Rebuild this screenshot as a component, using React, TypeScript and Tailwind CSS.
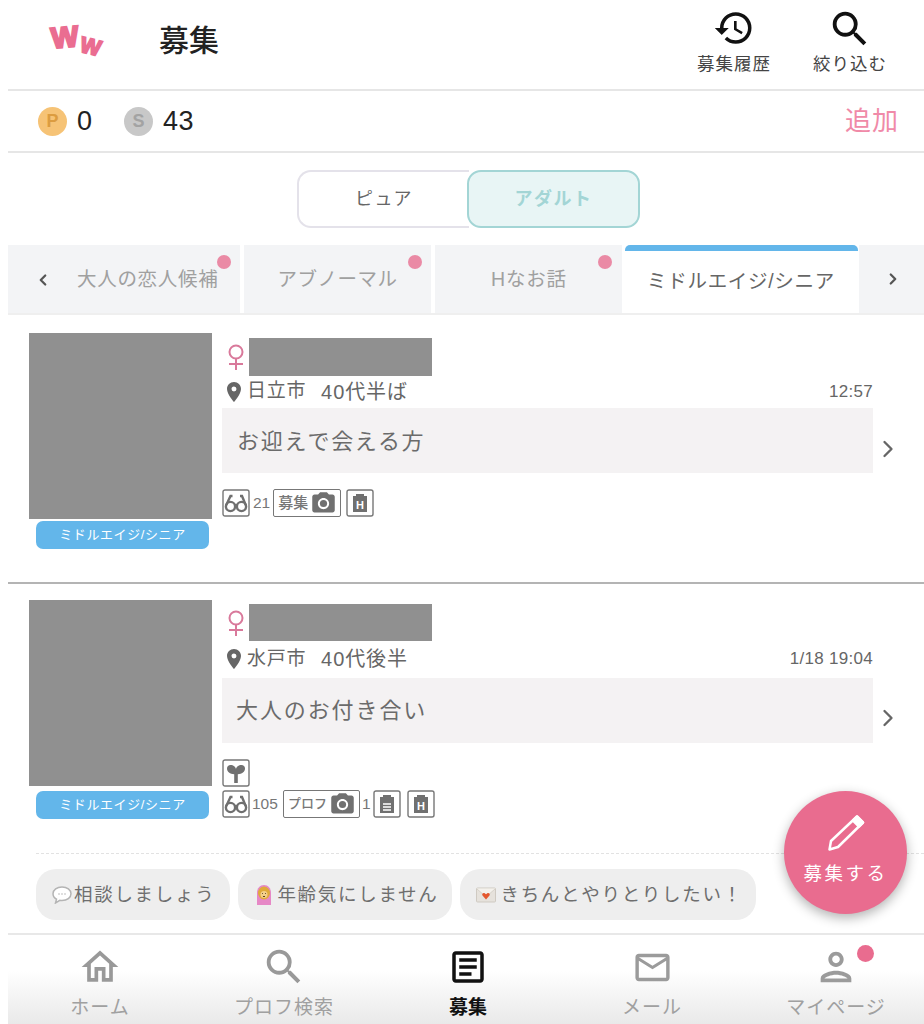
import { ChevronLeft, ChevronRight } from "lucide-react";
import { MdHistory, MdSearch, MdOutlineHome, MdOutlineArticle, MdMailOutline, MdOutlinePerson, MdPhotoCamera } from "react-icons/md";

const FONT = "[font-family:'Liberation_Sans','Noto_Sans_CJK_JP',sans-serif]";

function Glasses() {
  return (
    <svg viewBox="0 0 28 28" className="w-[28px] h-[28px]" fill="none" stroke="#6f6f6f" strokeWidth="2.4">
      <rect x="1" y="1" width="26" height="26" rx="2" strokeWidth="1.4" stroke="#777" />
      <circle cx="8.5" cy="17.5" r="4.6" />
      <circle cx="19.5" cy="17.5" r="4.6" />
      <path d="M12.8 16.5c.8-.7 1.6-.7 2.4 0M4.3 16 8.5 7h2M23.7 16 20 7h-2" />
    </svg>
  );
}

function Clip({ letter }: { letter?: string }) {
  return (
    <svg viewBox="0 0 28 28" className="w-[28px] h-[28px]">
      <rect x="1" y="1" width="26" height="26" rx="2" fill="none" stroke="#777" strokeWidth="1.4" />
      <path d="M7 7h3V5h8v2h3v16H7z" fill="#707070" />
      {letter ? (
        <text x="14" y="20" textAnchor="middle" fontSize="11" fontWeight="700" fill="#fff" fontFamily="Liberation Sans">
          {letter}
        </text>
      ) : (
        <path d="M10 14h8M10 17h8M10 20h8" stroke="#fff" strokeWidth="1.3" />
      )}
    </svg>
  );
}

function Sprout() {
  return (
    <svg viewBox="0 0 28 28" className="w-[28px] h-[28px]">
      <rect x="1" y="1" width="26" height="26" rx="2" fill="none" stroke="#777" strokeWidth="1.4" />
      <path d="M12.2 24v-8.7C8 15 5 13 5 9.500 5 7.500 6.500 6 8.500 6c2.800 0 5.500 2 5.500 4.500C14 8 16.700 6 19.500 6 21.500 6 23 7.500 23 9.500c0 3.500-3 5.500-7.200 5.800V24z" fill="#707070" />
    </svg>
  );
}

function PhotoTag({ label, size }: { label: string; size: string }) {
  return (
    <div className={`h-[28px] pl-[4px] pr-[3px] border-[1.5px] border-[#777] rounded-[2px] flex items-center gap-[2px] ${size} text-[#777] font-medium`}>
      {label}
      <MdPhotoCamera className="w-[27px] h-[27px] text-[#707070]" />
    </div>
  );
}

function Female() {
  return (
    <svg viewBox="0 0 20 26" className="w-[20px] h-[26px] shrink-0" fill="none" stroke="#d9799b" strokeWidth="2">
      <circle cx="10" cy="8" r="6.500" />
      <path d="M10 14.500V26M3 20h14" />
    </svg>
  );
}

function Pin() {
  return (
    <svg viewBox="0 0 24 24" className="w-[24px] h-[24px] shrink-0" fill="#666">
      <path d="M12 2C8.130 2 5 5.130 5 9c0 5.250 7 13 7 13s7-7.750 7-13c0-3.870-3.130-7-7-7zm0 9.500a2.500 2.500 0 0 1 0-5 2.500 2.500 0 0 1 0 5z" />
    </svg>
  );
}

function Post({
  city,
  age,
  time,
  message,
  top,
  nameTop,
  nameH,
  locH,
  badgeMt,
  chevronTop,
  msgClass,
  height,
  children,
}: {
  city: string;
  age: string;
  time: string;
  message: string;
  top: string;
  nameTop: string;
  nameH: string;
  locH: string;
  badgeMt: string;
  chevronTop: string;
  msgClass: string;
  height: string;
  children: React.ReactNode;
}) {
  return (
    <div className={`flex ${top} ${height}`}>
      <div className="w-[204px] pl-[21px] shrink-0">
        <div className="w-[183px] h-[186px] bg-[#909090]" />
        <div className={`${badgeMt} ml-[7px] w-[173px] h-[28px] rounded-[7px] bg-[#63b6ea] text-white text-[13px] tracking-[0.6px] flex items-center justify-center`}>
          ミドルエイジ/シニア
        </div>
      </div>
      <div className={`w-[651px] ml-[10px] shrink-0 ${nameTop}`}>
        <div className="flex items-center pl-[4px]">
          <Female />
          <div className={`ml-[3px] w-[183px] ${nameH} bg-[#909090]`} />
        </div>
        <div className={`flex items-center ${locH} text-[#666] pb-[1px]`}>
          <Pin />
          <span className="text-[19px] tracking-[0.7px] ml-[1px]">{city}</span>
          <span className="text-[20px] tracking-[0.9px] ml-[15px]">{age}</span>
          <span className="ml-auto text-[17px] tracking-[0.3px]">{time}</span>
        </div>
        <div className={`h-[65px] bg-[#f4f2f3] flex items-center ${msgClass} text-[22px] text-[#6b6b6b]`}>
          {message}
        </div>
        <div className="mt-[16px]">{children}</div>
      </div>
      <div className="flex-1 flex items-start">
        <ChevronRight className={`w-[28px] h-[28px] text-[#666] ml-[1px] ${chevronTop}`} strokeWidth={2} />
      </div>
    </div>
  );
}

function Chip({ icon, label, pad }: { icon: React.ReactNode; label: string; pad: string }) {
  return (
    <div className={`h-[51px] rounded-[20px] bg-[#eeeeee] flex items-center ${pad} text-[18.500px] tracking-[1.700px] text-[#6e6e6e]`}>
      {icon}
      {label}
    </div>
  );
}

function NavItem({ icon, label, active, dot }: { icon: React.ReactNode; label: string; active?: boolean; dot?: boolean }) {
  return (
    <div className="relative w-[184px] shrink-0 flex flex-col items-center pt-[9px]">
      <div className="h-[46px] flex items-center">{icon}</div>
      <span className={`text-[19px] leading-[26px] mt-[5px] ${active ? "font-bold text-[#111]" : "text-[#a0a0a0] tracking-[1px]"}`}>{label}</span>
      {dot && <span className="absolute left-[113px] top-[10px] w-[17px] h-[17px] rounded-full bg-[#e96c8f]" />}
    </div>
  );
}

export default function App() {
  return (
    <div className={`${FONT} relative w-[924px] h-[1024px] overflow-hidden bg-white pl-[8px] flex flex-col`}>
      {/* Header */}
      <div className="h-[91px] border-b-2 border-[#e6e6e6] flex shrink-0">
        <div className="w-[151px] flex items-start">
          <svg viewBox="0 0 60 40" className="w-[60px] h-[40px] ml-[40px] mt-[22px] overflow-visible">
            <text x="3" y="25" fontSize="29" fontWeight="900" fill="#ea6d91" stroke="#ea6d91" strokeWidth="2.200" fontFamily="Liberation Sans" transform="rotate(-5 18 15)">W</text>
            <text x="32" y="32" fontSize="22" fontWeight="900" fill="#ea6d91" stroke="#ea6d91" strokeWidth="1.800" fontFamily="Liberation Sans" transform="rotate(14 43 25)">W</text>
          </svg>
        </div>
        <h1 className="text-[30px] leading-[81px] text-[#222] font-medium">募集</h1>
        <div className="ml-auto flex">
          <div className="w-[116px] flex flex-col items-center">
            <MdHistory className="w-[42px] h-[42px] mt-[7px] text-[#111]" />
            <span className="text-[17.500px] tracking-[1px] text-[#444] mt-[2px]">募集履歴</span>
          </div>
          <div className="w-[116px] mr-[16px] flex flex-col items-center">
            <MdSearch className="w-[46px] h-[46px] mt-[6px] text-[#111]" />
            <span className="text-[17.500px] tracking-[1px] text-[#444] -mt-[1px]">絞り込む</span>
          </div>
        </div>
      </div>

      {/* Points */}
      <div className="h-[62px] border-b-2 border-[#e6e6e6] flex items-center pl-[30px] pr-[25px] shrink-0">
        <div className="w-[29px] h-[29px] rounded-full bg-[#f6c376] text-[#dc9c40] text-[18px] font-bold flex items-center justify-center">P</div>
        <span className="ml-[10px] text-[27px] text-[#222] w-[47px]">0</span>
        <div className="w-[29px] h-[29px] rounded-full bg-[#c8c8c8] text-[#a3a3a3] text-[18px] font-bold flex items-center justify-center">S</div>
        <span className="ml-[10px] text-[27px] tracking-[0.5px] text-[#222]">43</span>
        <span className="ml-auto text-[26px] tracking-[1px] text-[#f08aa8]">追加</span>
      </div>

      {/* Pure / Adult */}
      <div className="h-[92px] flex pt-[17px] pl-[289px] shrink-0">
        <div className="w-[172px] h-[58px] border-2 border-r-0 border-[#e4e2ea] rounded-l-[14px] flex items-center justify-center text-[18px] tracking-[1.500px] text-[#666] -mr-[2px]">
          ピュア
        </div>
        <div className="w-[173px] h-[58px] border-2 border-[#a3d5d5] bg-[#e8f5f5] rounded-[14px] flex items-center justify-center text-[18px] font-bold tracking-[1.500px] text-[#a3d5d5]">
          アダルト
        </div>
      </div>

      {/* Category tabs */}
      <div className="h-[70px] border-b-2 border-[#efefef] flex shrink-0 text-[19.500px] text-[#a0a0a0]">
        <div className="relative w-[232px] bg-[#f3f4f6] flex items-center pl-[26px] mr-[4px] pt-[2px]">
          <ChevronLeft className="w-[18px] h-[18px] text-[#555]" strokeWidth={3} />
          <span className="ml-[25px] tracking-[0.700px]">大人の恋人候補</span>
          <span className="absolute right-[9px] top-[10px] w-[14px] h-[14px] rounded-full bg-[#ea8aa5]" />
        </div>
        <div className="relative w-[187px] bg-[#f3f4f6] flex items-center justify-center mr-[4px] pt-[2px]">
          <span className="tracking-[0.500px]">アブノーマル</span>
          <span className="absolute right-[9px] top-[10px] w-[14px] h-[14px] rounded-full bg-[#ea8aa5]" />
        </div>
        <div className="relative w-[187px] bg-[#f3f4f6] flex items-center pl-[56px] pt-[2px]">
          <span className="tracking-[0.800px]">Hなお話</span>
          <span className="absolute right-[10px] top-[10px] w-[14px] h-[14px] rounded-full bg-[#ea8aa5]" />
        </div>
        <div className="w-[237px] bg-white flex flex-col">
          <div className="h-[6px] ml-[3px] w-[233px] bg-[#63b6ea] rounded-t-[5px]" />
          <div className="flex-1 flex items-center justify-center text-[#666] text-[19.500px] tracking-[0.700px] pl-[1px]">ミドルエイジ/シニア</div>
        </div>
        <div className="flex-1 bg-[#f3f4f6] flex items-center pl-[25px]">
          <ChevronRight className="w-[18px] h-[18px] text-[#555]" strokeWidth={3} />
        </div>
      </div>

      {/* Posts */}
      <div className="border-b-2 border-[#b4b4b4] shrink-0">
        <Post
          city="日立市"
          age="40代半ば"
          time="12:57"
          message="お迎えで会える方"
          top="pt-[18px]"
          nameTop="pt-[5px]"
          nameH="h-[38px]"
          locH="h-[32px]"
          badgeMt="mt-[2px]"
          chevronTop="mt-[102px]"
          msgClass="pl-[15px] pt-[2px] tracking-[1.700px]"
          height="h-[267px]"
        >
          <div className="flex items-center gap-[3px]">
            <div className="flex items-center text-[15.500px] text-[#777]">
              <Glasses />
              <span className="ml-[3px]">21</span>
            </div>
            <PhotoTag label="募集" size="text-[15px]" />
            <div className="ml-[2px]">
              <Clip letter="H" />
            </div>
          </div>
        </Post>
      </div>

      <Post
        city="水戸市"
        age="40代後半"
        time="1/18 19:04"
        message="大人のお付き合い"
        top="pt-[16px]"
        nameTop="pt-[4px]"
        nameH="h-[37px]"
        locH="h-[37px]"
        badgeMt="mt-[5px]"
        chevronTop="mt-[104px]"
        msgClass="pl-[14px] tracking-[1.900px]"
        height="h-[270px]"
      >
        <Sprout />
        <div className="flex items-center mt-[3px]">
          <div className="flex items-center text-[15.500px] text-[#777]">
            <Glasses />
            <span className="ml-[2px]">105</span>
          </div>
          <PhotoTag label="プロフ" size="text-[13px] ml-[5px]" />
          <span className="text-[15.500px] text-[#777] ml-[2px]">1</span>
          <div className="ml-[2px]">
            <Clip />
          </div>
          <div className="ml-[6px]">
            <Clip letter="H" />
          </div>
        </div>
      </Post>

      {/* Tags */}
      <div className="ml-[28px] border-t border-dashed border-[#e2e2e2] pt-[15px] flex gap-[8px] shrink-0 -mt-[1px]">
        <Chip
          label="相談しましょう"
          pad="pl-[16px] pr-[15px]"
          icon={
            <svg viewBox="0 0 20 18" className="w-[20px] h-[18px] mr-[2px]">
              <path d="M10 1c5 0 9 2.800 9 6.800s-4 6.700-9 6.700c-.800 0-1.500 0-2.200-.200L3.500 17l1-3.800C2.300 12 1 10 1 7.800 1 3.800 5 1 10 1z" fill="#fff" stroke="#b4b4b4" strokeWidth="1.500" />
              <path d="M6.500 8h1M9.500 8h1M12.500 8h1" stroke="#aaa" strokeWidth="1.500" />
            </svg>
          }
        />
        <Chip
          label="年齢気にしません"
          pad="pl-[17px] pr-[14px]"
          icon={
            <svg viewBox="0 0 18 22" className="w-[18px] h-[22px] mr-[4px]">
              <path d="M2 21V9c0-5 3-8 7-8s7 3 7 8v12z" fill="#e688c6" />
              <ellipse cx="9" cy="9" rx="6" ry="6.500" fill="#e0a93a" />
              <circle cx="9" cy="10.500" r="3.500" fill="#f3cf8a" />
              <path d="M7 9.500h.8M10.200 9.500h.8M8 12.500h2" stroke="#5d4022" strokeWidth="1.200" />
            </svg>
          }
        />
        <Chip
          label="きちんとやりとりしたい！"
          pad="pl-[16px] pr-[13px]"
          icon={
            <svg viewBox="0 0 20 16" className="w-[20px] h-[16px] mr-[4px]">
              <rect x="0.500" y="1" width="19" height="14" rx="1" fill="#e6e2dc" stroke="#cfcac2" />
              <path d="M0.500 1.500 10 10l9.500-8.500" fill="#f4f1ec" stroke="#d6d1c9" />
              <path d="M10 12.500 6.500 8.500c-1-1.500.8-3.200 2.200-2.200L10 7.300l1.300-1c1.400-1 3.200.7 2.200 2.200z" fill="#e4572e" />
            </svg>
          }
        />
      </div>

      {/* Bottom nav */}
      <div className="absolute left-[8px] right-0 bottom-0 h-[91px] border-t-2 border-[#e8e8e8] bg-gradient-to-b from-white from-[40%] to-[#e9e9e9] flex overflow-hidden">
        <NavItem icon={<MdOutlineHome className="w-[44px] h-[44px] text-[#999]" />} label="ホーム" />
        <NavItem icon={<MdSearch className="w-[46px] h-[46px] text-[#999]" />} label="プロフ検索" />
        <NavItem icon={<MdOutlineArticle className="w-[42px] h-[42px] text-[#111]" />} label="募集" active />
        <NavItem icon={<MdMailOutline className="w-[41px] h-[41px] text-[#9b9b9b]" />} label="メール" />
        <NavItem icon={<MdOutlinePerson className="w-[46px] h-[46px] text-[#9b9b9b]" />} label="マイページ" dot />
      </div>

      {/* Post button */}
      <div className="absolute left-[784px] top-[791px] w-[123px] h-[123px] rounded-full bg-[#e96c8f] shadow-[0_4px_12px_rgba(0,0,0,0.3)] flex flex-col items-center text-white">
        <svg viewBox="0 0 38 38" className="w-[38px] h-[38px] mt-[23px]" fill="none" stroke="#fff" strokeWidth="2.500" strokeLinejoin="round">
          <path d="M30 2.500 36 8.500 11 33 2.500 35.500 4 27z" />
          <path d="M30 2.500 36 8.500 32 12.500 26 6.500z" fill="#fff" />
        </svg>
        <span className="text-[18.500px] tracking-[2.500px] mt-[8px]">募集する</span>
      </div>
    </div>
  );
}
